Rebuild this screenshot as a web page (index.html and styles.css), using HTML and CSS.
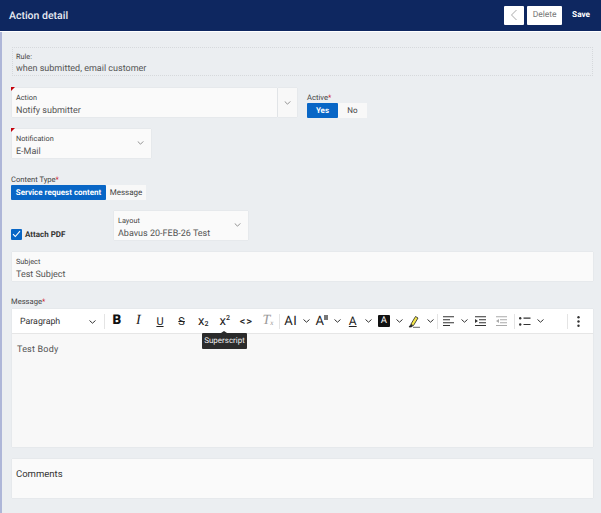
FILE: index.html
```html
<!DOCTYPE html>
<html lang="en">
<head>
<meta charset="utf-8">
<title>Action detail</title>
<link rel="stylesheet" href="styles.css">
</head>
<body>
<header class="topbar">
  <h1 class="title">Action detail</h1>
  <div class="actions">
    <button class="btn btn-icon"><svg width="8" height="12" viewBox="0 0 8 12"><path d="M6.5 1 1.500 6l5 5" fill="none" stroke="#aaa" stroke-width="1"/></svg></button>
    <button class="btn btn-delete">Delete</button>
    <button class="btn-save">Save</button>
  </div>
</header>
<main class="content">
  <div class="field field-rule">
    <span class="label">Rule:</span>
    <span class="value">when submitted, email customer</span>
  </div>

  <div class="row row-action">
    <div class="field field-action req">
      <span class="label">Action</span>
      <span class="value">Notify submitter</span>
    </div>
    <div class="chev-box"><svg class="chev" width="7" height="4" viewBox="0 0 8 5"><path d="M.5.5 4 4 7.500.5"/></svg></div>
    <div class="active">
      <span class="plain-label">Active<i class="star">*</i></span>
      <div class="toggle">
        <span class="opt on opt-yes">Yes</span>
        <span class="opt opt-no">No</span>
      </div>
    </div>
  </div>

  <div class="field field-select field-notif req">
    <div>
      <span class="label">Notification</span>
      <span class="value">E-Mail</span>
    </div>
    <svg class="chev" width="7" height="4" viewBox="0 0 8 5"><path d="M.5.5 4 4 7.500.5"/></svg>
  </div>

  <div class="ctype">
    <span class="plain-label">Content Type<i class="star">*</i></span>
    <div class="toggle">
      <span class="opt on opt-service">Service request content</span>
      <span class="opt opt-msg">Message</span>
    </div>
  </div>

  <div class="row row-layout">
    <label class="attach">
      <span class="check"><svg width="9" height="8" viewBox="0 0 9 8"><path d="M1 4.200 3.300 6.500 8 1.200" fill="none" stroke="#fff" stroke-width="1.100"/></svg></span>
      Attach PDF
    </label>
    <div class="field field-select field-layout">
      <div>
        <span class="label">Layout</span>
        <span class="value">Abavus 20-FEB-26 Test</span>
      </div>
      <svg class="chev" width="7" height="4" viewBox="0 0 8 5"><path d="M.5.5 4 4 7.500.5"/></svg>
    </div>
  </div>

  <div class="field field-subject">
    <span class="label">Subject</span>
    <span class="value">Test Subject</span>
  </div>

  <span class="plain-label label-message">Message<i class="star">*</i></span>
  <div class="editor">
    <div class="toolbar">
      <div class="tb-para"><span>Paragraph</span><svg class="tb-chev" width="7" height="4" viewBox="0 0 7 4"><path d="M.5.500 3.500 3.200 6.500.500"/></svg></div>
      <span class="sep sep-a"></span>
      <span class="tb g-b">B</span>
      <span class="tb g-i">I</span>
      <span class="tb g-u">U</span>
      <span class="tb g-s">S</span>
      <span class="tb g-x"><span>x</span><sub>2</sub></span>
      <span class="tb g-x"><span>x</span><sup>2</sup></span>
      <span class="tb g-code">&lt;&gt;</span>
      <span class="tb g-t"><span>T</span><small>x</small></span>
      <span class="sep"></span>
      <div class="tb-drop"><span class="tb g-ai">AI</span><svg class="tb-chev" width="7" height="4" viewBox="0 0 7 4"><path d="M.5.500 3.500 3.200 6.500.500"/></svg></div>
      <div class="tb-drop"><span class="tb g-a2"><span>A</span><small></small></span><svg class="tb-chev" width="7" height="4" viewBox="0 0 7 4"><path d="M.5.500 3.500 3.200 6.500.500"/></svg></div>
      <div class="tb-drop"><span class="tb g-a">A</span><svg class="tb-chev" width="7" height="4" viewBox="0 0 7 4"><path d="M.5.500 3.500 3.200 6.500.500"/></svg></div>
      <div class="tb-drop"><span class="tb"><span class="g-bg">A</span></span><svg class="tb-chev" width="7" height="4" viewBox="0 0 7 4"><path d="M.5.500 3.500 3.200 6.500.500"/></svg></div>
      <div class="tb-drop"><span class="tb"><svg width="13" height="13" viewBox="0 0 13 13"><path d="M3 9 7.500 1.500l2.500 1.500L5.500 10.500 3.500 10z" fill="#f6e84a" stroke="#222" stroke-width=".8"/><path d="M1 12 3 9.500 4.500 11 3.500 12zM5 12.300h7" fill="#222" stroke="#222" stroke-width=".7"/></svg></span><svg class="tb-chev" width="7" height="4" viewBox="0 0 7 4"><path d="M.5.500 3.500 3.200 6.500.500"/></svg></div>
      <span class="sep sep-b"></span>
      <div class="tb-drop"><span class="tb"><svg width="12" height="10" viewBox="0 0 12 10"><path d="M0 .7h11M0 3.700h7M0 6.700h11M0 9.500h7" stroke="#333" stroke-width="1.100"/></svg></span><svg class="tb-chev" width="7" height="4" viewBox="0 0 7 4"><path d="M.5.500 3.500 3.200 6.500.500"/></svg></div>
      <span class="tb"><svg width="12" height="10" viewBox="0 0 12 10"><path d="M1 .7h11M5 3.700h7M5 6.700h7M1 9.500h11" stroke="#333" stroke-width="1.100"/><path d="M1 3l3 2-3 2z" fill="#333"/></svg></span>
      <span class="tb"><svg width="12" height="10" viewBox="0 0 12 10"><path d="M1 .7h11M5 3.700h7M5 6.700h7M1 9.500h11" stroke="#aaa" stroke-width="1.100"/><path d="M4 3 1 5l3 2z" fill="#aaa"/></svg></span>
      <span class="sep sep-c"></span>
      <div class="tb-drop"><span class="tb"><svg width="12" height="9" viewBox="0 0 12 9"><circle cx="1.200" cy="1.200" r="1.200" fill="#333"/><circle cx="1.200" cy="7.500" r="1.200" fill="#333"/><path d="M4.500 1.200h7M4.500 7.500h7" stroke="#333" stroke-width="1.200"/></svg></span><svg class="tb-chev" width="7" height="4" viewBox="0 0 7 4"><path d="M.5.500 3.500 3.200 6.500.500"/></svg></div>
      <span class="sep sep-d"></span>
      <span class="tb"><svg width="3" height="11" viewBox="0 0 3 11"><circle cx="1.500" cy="1.300" r="1.200" fill="#333"/><circle cx="1.500" cy="5.500" r="1.200" fill="#333"/><circle cx="1.500" cy="9.700" r="1.200" fill="#333"/></svg></span>
      <div class="tooltip">Superscript</div>
    </div>
    <div class="editor-body">Test Body</div>
  </div>

  <div class="comments">Comments</div>
</main>
</body>
</html>
```
FILE: styles.css
```css
* { box-sizing: border-box; }
html, body { margin: 0; height: 100%; }
body {
  background: #ebeef1;
  font-family: Roboto, "Liberation Sans", Arial, sans-serif;
  color: #444;
  overflow: hidden;
  text-rendering: geometricPrecision;
}
.topbar {
  height: 32px;
  background: #0e2760;
  border-bottom: 1px solid #fff;
  display: flex;
  align-items: center;
  justify-content: space-between;
  padding: 0 11px 1px 9px;
}
.title { margin: 0; font-size: 10.500px; font-weight: 500; color: #e8ebf2; }
.actions { display: flex; align-items: center; gap: 3px; }
.btn {
  height: 19px;
  padding: 0;
  border: 0;
  border-radius: 1px;
  background: #fff;
  color: #777;
  font: 8.500px Roboto, sans-serif;
  text-rendering: geometricPrecision;
}
.btn-icon { width: 20px; display: flex; align-items: center; justify-content: center; }
.btn-delete { width: 35px; }
.btn-save {
  background: none;
  border: 0;
  color: #fff;
  font: 700 8.200px Roboto, sans-serif;
  text-rendering: geometricPrecision;
  padding: 0 0 0 7px;
}
.content {
  border-left: 2px solid #aeb6d8;
  padding: 15px 8px 0 10px;
  height: 481px;
}
.field {
  background: #fafafa;
  height: 29px;
  padding: 5px 4px 0;
  position: relative;
  box-shadow: 0 0 1px rgba(0,0,0,.12);
}
.label { display: block; font-size: 7.300px; line-height: 9px; margin-bottom: 3px; color: #444; }
.value { display: block; font-size: 9px; line-height: 12px; color: #555; }
.field-rule {
  background: none;
  box-shadow: none;
  border: 1px dotted #d6d9dc;
  padding: 4px 3px 0;
  margin-bottom: 12px;
}
.field-rule .label { margin-bottom: 2px; }
.req::before {
  content: "";
  position: absolute;
  left: -1px;
  top: -1px;
  border-style: solid;
  border-width: 4px 4px 0 0;
  border-color: #c5000b transparent transparent transparent;
}
.row { display: flex; }
.row-action { margin-bottom: 11px; height: 30px; }
.field-action { width: 265px; }
.chev-box {
  width: 19px;
  height: 29px;
  margin-left: 1px;
  background: #f8f8f8;
  display: flex;
  align-items: center;
  justify-content: center;
  box-shadow: 0 0 1px rgba(0,0,0,.12);
}
.chev path { fill: none; stroke: #777; stroke-width: 1; }
.active { margin-left: 10px; padding-top: 5px; }
.plain-label { display: block; font-size: 7.600px; line-height: 10px; color: #444; }
.star { color: #d0202a; font-style: normal; }
.toggle { display: flex; }
.opt {
  height: 15px;
  font-size: 8px;
  line-height: 15px;
  text-align: center;
  color: #444;
  background: #f8f8f8;
}
.on { background: #0866c6; color: #fff; font-weight: 700; border-radius: 1px; }
.opt-yes { width: 31px; }
.opt-no { width: 29px; }
.field-select { display: flex; justify-content: space-between; align-items: flex-start; }
.field-select .chev { margin: 7px 3px 0 0; }
.ctype { margin: 17px 0 0 -1px; }
.field-notif { width: 139px; }
.opt-service { width: 95px; }
.opt-msg { width: 40px; }
.row-layout { margin: 11px 0 12px -1px; height: 29px; align-items: flex-end; }
.attach {
  width: 103px;
  display: flex;
  align-items: center;
  gap: 3px;
  font-size: 8px;
  font-weight: 700;
  color: #333;
  height: 12px;
}
.check {
  width: 11px;
  height: 11px;
  background: #0866c6;
  border-radius: 1px;
  display: flex;
  align-items: center;
  justify-content: center;
}
.field-layout { width: 134px; height: 29px; align-self: flex-start; }
.field-subject { margin-bottom: 16px; }
.label-message { margin-left: -1px; margin-bottom: 2px; }
.editor { background: #f8f8f8; box-shadow: 0 0 1px rgba(0,0,0,.12); }
.toolbar {
  height: 25px;
  background: #fff;
  border-bottom: 1px solid #e6e6e6;
  display: flex;
  align-items: center;
  position: relative;
}
.tb-para {
  width: 88px;
  display: flex;
  justify-content: space-between;
  align-items: center;
  padding: 1px 3px 0 8px;
  font-size: 8.800px;
  color: #333;
}
.tb-chev { flex: none; margin: 0 1px; }
.tb-chev path { fill: none; stroke: #333; stroke-width: 1; }
.sep { width: 1px; height: 15px; background: #e4e4e4; flex: none; }
.sep-a { margin: 0 1px 0 4px; }
.sep-b { margin: 0 0 0 2px; }
.sep-c { margin: 0 -1px 0 2px; }
.sep-d { margin: 0 0 0 22px; }
.tb {
  width: 21.600px;
  height: 20px;
  flex: none;
  display: flex;
  align-items: center;
  justify-content: center;
  color: #222;
  font-size: 11px;
  line-height: 1;
}
.tb-drop { display: flex; align-items: center; width: 31px; flex: none; }
.tb-drop .tb { width: 22px; }
.g-b { font-weight: 900; font-size: 13.500px; color: #111; }
.g-i { font-family: "Liberation Serif", serif; font-style: italic; font-size: 14px; }
.g-u { text-decoration: underline; font-size: 11px; }
.g-s { text-decoration: line-through; font-size: 11px; }
.g-x { font-size: 13px; }
.g-x sub, .g-x sup { font-size: 7px; line-height: 7px; font-weight: 500; vertical-align: baseline; }
.g-x sub { align-self: flex-end; margin-bottom: 3px; }
.g-x sup { align-self: flex-start; margin-top: 4px; }
.g-code { font-size: 11px; font-weight: 500; letter-spacing: 1px; }
.g-t { font-family: "Liberation Serif", serif; font-style: italic; color: #999; font-size: 14px; }
.g-t small { font-size: 7px; align-self: flex-end; margin-bottom: 4px; }
.g-ai { font-size: 13px; font-weight: 400; letter-spacing: .6px; }
.g-a2 { font-size: 13px; }
.g-a2 small { width: 4px; height: 5px; background: #777; margin: -8px 0 0 0; }
.g-a { font-size: 12px; text-decoration: underline; }
.g-bg {
  width: 12px;
  height: 12px;
  background: #111;
  color: #fff;
  font-size: 9.500px;
  line-height: 12px;
  text-align: center;
  border-radius: 1px;
}
.tooltip {
  position: absolute;
  left: 190px;
  top: 24px;
  width: 45px;
  height: 16px;
  background: #2b2b2b;
  color: #eee;
  font-size: 8px;
  line-height: 16px;
  text-align: center;
  border-radius: 1px;
}
.tooltip::before {
  content: "";
  position: absolute;
  left: 19px;
  top: -2px;
  border-style: solid;
  border-width: 0 3px 2px;
  border-color: transparent transparent #2b2b2b;
}
.editor-body {
  height: 113px;
  padding: 11px 5px 0;
  font-size: 9px;
  line-height: 11px;
  color: #555;
  letter-spacing: .2px;
}
.comments {
  margin-top: 12px;
  height: 39px;
  background: #fafafa;
  padding: 10px 4px 0;
  font-size: 9.500px;
  line-height: 11px;
  color: #333;
  box-shadow: 0 0 1px rgba(0,0,0,.12);
}
```
